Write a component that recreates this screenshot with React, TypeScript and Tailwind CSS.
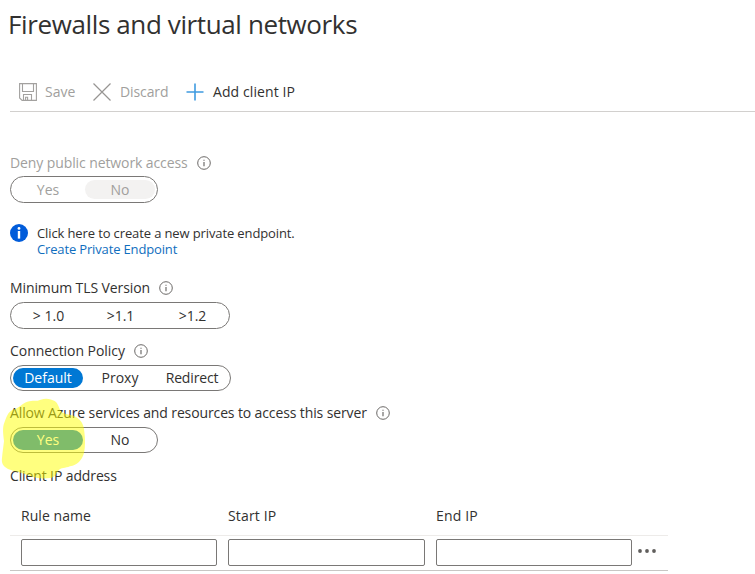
import type { ReactNode } from "react";

function InfoIcon() {
  return (
    <svg className="h-[14px] w-[14px] shrink-0" viewBox="0 0 14 14" fill="none">
      <circle cx="7" cy="7" r="6.3" stroke="#6b6967" strokeWidth="1" />
      <path d="M7 6v4.2" stroke="#605e5c" strokeWidth="1.1" />
      <path d="M7 3.7v1.1" stroke="#605e5c" strokeWidth="1.1" />
    </svg>
  );
}

function SaveIcon() {
  return (
    <svg className="h-[18px] w-[18px] shrink-0" viewBox="0 0 18 18" fill="none" stroke="#a3a19f" strokeWidth="1.1">
      <path d="M.6.6h16.8v16.8H3.1L.6 14.9z" />
      <path d="M3.5.6v7.9h11V.6" />
      <path d="M4.5 17.4v-5.9h8v5.9" />
      <path d="M6.6 17.4v-3.1h2v3.1" />
    </svg>
  );
}

function DiscardIcon() {
  return (
    <svg className="h-[18px] w-[18px] shrink-0" viewBox="0 0 18 18" fill="none" stroke="#979593" strokeWidth="1.2">
      <path d="M.5.5l17 17M17.5.5l-17 17" />
    </svg>
  );
}

function AddIcon() {
  return (
    <svg className="h-[18px] w-[18px] shrink-0" viewBox="0 0 18 18" fill="none" stroke="#3f9be0" strokeWidth="1.6">
      <path d="M9 .5v17M.5 9h17" />
    </svg>
  );
}

function Label({ children, className = "", info = true }: { children: ReactNode; className?: string; info?: boolean }) {
  return (
    <div className={`flex h-5 items-center gap-[9px] ${className}`}>
      <span>{children}</span>
      {info && <InfoIcon />}
    </div>
  );
}

function Pill({ children, className = "" }: { children: ReactNode; className?: string }) {
  return <div className={`flex w-fit items-stretch rounded-full border border-[#7a7876] px-px ${className}`}>{children}</div>;
}

function Option({ children, className = "" }: { children: ReactNode; className?: string }) {
  return <button className={`mx-px flex w-[70px] items-center justify-center whitespace-pre rounded-full ${className}`}>{children}</button>;
}

function Highlight() {
  return (
    <svg className="pointer-events-none absolute top-[395px] left-0 h-[90px] w-[100px]" viewBox="0 0 300 270">
      <path
        fill="#ffff00"
        fillOpacity=".5"
        d="M12 138C10 118 6 98 14 80C22 60 26 48 42 43C58 38 66 26 82 20C98 14 110 20 122 14C138 8 154 12 164 18C176 26 176 40 184 50C194 60 212 56 228 66C244 76 252 90 253 110C256 132 256 156 252 174C246 196 232 210 210 214C196 220 182 218 176 226C168 236 166 248 150 249C130 252 106 250 90 243C66 232 44 230 24 222C8 212 4 204 6 188C8 170 10 156 12 138Z"
      />
    </svg>
  );
}

export default function App() {
  return (
    <main className="relative h-[574px] w-[755px] overflow-hidden bg-white pt-[6px] pl-[10px] font-['Open_Sans','Noto_Sans',sans-serif] text-[14px] leading-5 whitespace-nowrap text-[#323130]">
      <h1 className="-ml-[2px] h-9 text-[26px] leading-9 tracking-[-0.38px]">Firewalls and virtual networks</h1>

      <div className="mt-[30px] flex h-10 items-center border-b border-[#d2d0ce] pl-[9px]">
        <button className="flex items-center gap-[8px] text-[#a19f9d]">
          <SaveIcon />
          <span className="w-[48px] text-left">Save</span>
        </button>
        <button className="flex items-center gap-[9px] text-[#a19f9d]">
          <DiscardIcon />
          <span className="w-[66px] text-left tracking-[-0.1px]">Discard</span>
        </button>
        <button className="flex items-center gap-[9px]">
          <AddIcon />
          <span className="tracking-[0.1px]">Add client IP</span>
        </button>
      </div>

      <Label className="mt-[41px] tracking-[-0.1px] text-[#a19f9d]">Deny public network access</Label>
      <Pill className="mt-[3px] h-[27px] text-[#a19f9d]">
        <Option className="my-[3px]">Yes</Option>
        <Option className="my-[3px] bg-[#f3f2f1]">No</Option>
      </Pill>

      <div className="mt-[21px] flex h-[34px] gap-[9px]">
        <svg className="h-[18px] w-[18px] shrink-0" viewBox="0 0 18 18">
          <circle cx="9" cy="9" r="9" fill="#015cda" />
          <circle cx="9" cy="4.4" r="1.4" fill="#fff" />
          <path d="M7.8 7h2.4v7.6H7.8z" fill="#fff" />
        </svg>
        <div className="pt-px text-[13px] leading-4">
          <p className="tracking-[-0.12px]">Click here to create a new private endpoint.</p>
          <a className="block tracking-[-0.15px] text-[#106ebe]">Create Private Endpoint</a>
        </div>
      </div>

      <Label className="mt-5 tracking-[-0.1px]">Minimum TLS Version</Label>
      <Pill className="mt-1 h-[27px]">
        <Option className="pl-px">&gt; 1.0</Option>
        <Option className="pl-px">&gt;1.1</Option>
        <Option className="pl-px">&gt;1.2</Option>
      </Pill>

      <Label className="mt-3 tracking-[-0.05px]">Connection Policy</Label>
      <Pill className="mt-1 h-[26px] w-[221px]!">
        <Option className="my-[2px] bg-[#0078d4] text-white">Default</Option>
        <Option>Proxy</Option>
        <Option className="tracking-[-0.15px]">Redirect</Option>
      </Pill>

      <Label className="mt-3 tracking-[-0.12px]">Allow Azure services and resources to access this server</Label>
      <Pill className="mt-1 h-[26px]">
        <Option className="my-[2px] bg-[#0078d4] text-white">Yes</Option>
        <Option>No</Option>
      </Pill>

      <Label info={false} className="mt-[13px] tracking-[-0.12px]">Client IP address</Label>

      <div className="mt-5 w-[658px]">
        <div className="flex h-[30px] items-start border-b border-[#edebe9] pl-[11px] font-medium">
          <span className="w-[207px] tracking-[0.05px]">Rule name</span>
          <span className="w-[208px] tracking-[0.15px]">Start IP</span>
          <span className="tracking-[0.15px]">End IP</span>
        </div>
        <div className="flex h-[35px] items-start gap-[11px] border-b border-[#c8c6c4] pt-[3px] pl-[11px]">
          <input className="h-[27px] w-[196px] rounded-[2px] border border-[#7a7876]" />
          <input className="h-[27px] w-[197px] rounded-[2px] border border-[#7a7876]" />
          <input className="h-[27px] w-[196px] rounded-[2px] border border-[#7a7876]" />
          <svg className="mt-[10px] -ml-[6px] h-1 w-[20px]" viewBox="0 0 20 4" fill="#605e5c">
            <circle cx="3" cy="2" r="1.9" />
            <circle cx="10" cy="2" r="1.9" />
            <circle cx="17" cy="2" r="1.9" />
          </svg>
        </div>
      </div>

      <Highlight />
    </main>
  );
}
